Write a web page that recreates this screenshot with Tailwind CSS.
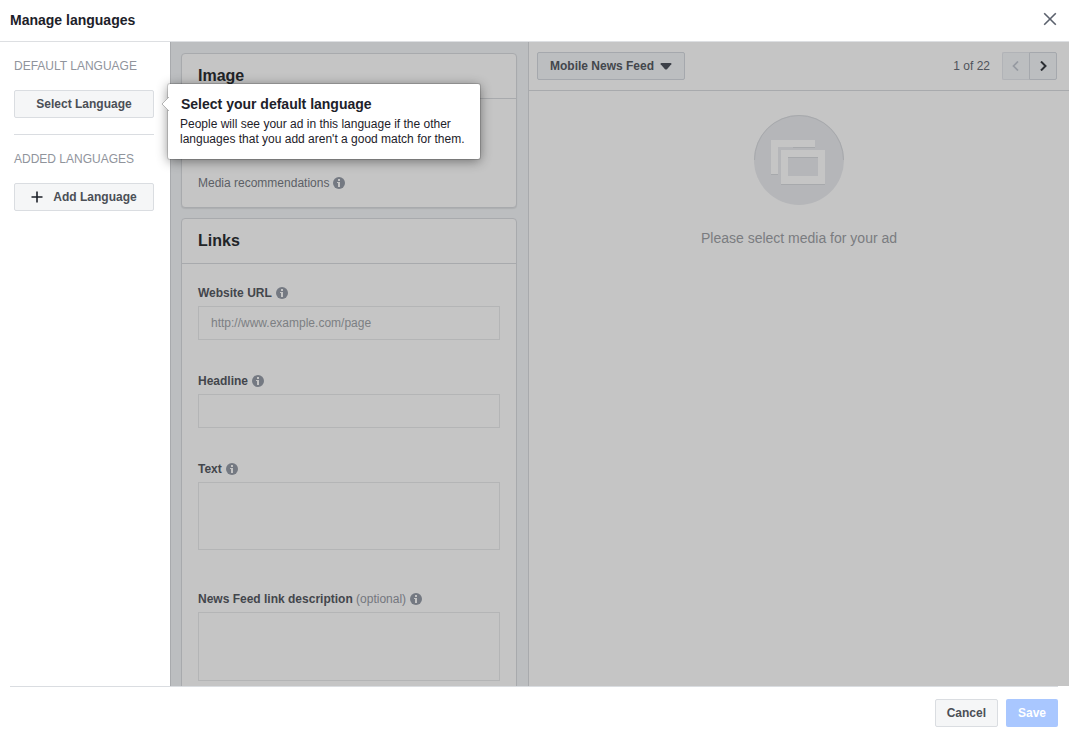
<!DOCTYPE html>
<html lang="en">
<head>
<meta charset="utf-8">
<meta name="viewport" content="width=device-width, initial-scale=1">
<title>Manage languages</title>
<script src="https://cdn.jsdelivr.net/npm/@tailwindcss/browser@4"></script>
</head>
<body class="flex h-screen flex-col overflow-hidden bg-white font-['Liberation_Sans',Arial,sans-serif] text-xs text-[#4b4f56]">
<svg class="hidden">
  <symbol id="info" viewBox="0 0 12 12">
    <circle cx="6" cy="6" r="6" fill="#747982"/>
    <path fill="#c5c5c5" d="M5 2h2v2H5zM4 5h3v5H5V6H4z"/>
  </symbol>
</svg>

<header class="flex h-[42px] shrink-0 items-center justify-between border-b border-[#dddfe2] pr-3 pb-[2px] pl-[10px]">
  <h1 class="text-sm font-bold text-[#1d2129]">Manage languages</h1>
  <button type="button" aria-label="Close" class="pb-[2px]">
    <svg class="size-[14px]" viewBox="0 0 14 14" fill="none" stroke="#5b616d" stroke-width="1.6"><path d="M1.2 1.2l11.6 11.6M12.8 1.2L1.2 12.8"/></svg>
  </button>
</header>

<main class="flex min-h-0 flex-1">
  <aside class="flex w-[170px] shrink-0 flex-col px-4 pt-4 pl-[14px]">
    <h2 class="whitespace-nowrap leading-4 text-[#90949c]">DEFAULT LANGUAGE</h2>
    <div class="relative mt-4">
      <button type="button" class="block h-7 w-full rounded-xs border border-[#dadde1] bg-[#f5f6f7] font-bold">Select Language</button>
      <div role="tooltip" class="absolute -top-[6px] left-full z-10 ml-[14px] w-[312px] rounded-xs bg-white px-3 pt-[10px] pb-3 text-[#1d2129] shadow-[0_0_0_1px_rgba(0,0,0,0.15),0_2px_12px_rgba(0,0,0,0.45)]">
        <svg class="absolute top-[13px] -left-[7px] h-[14px] w-2" viewBox="0 0 8 14"><path d="M8 0L1 7l7 7" fill="#fff" stroke="#b4b4b4"/></svg>
        <h3 class="pl-px text-sm leading-5 font-bold">Select your default language</h3>
        <p class="mt-[3px] leading-[15px]">People will see your ad in this language if the other languages that you add aren't a good match for them.</p>
      </div>
    </div>
    <hr class="my-4 border-[#dadde1]">
    <h2 class="whitespace-nowrap leading-4 text-[#90949c]">ADDED LANGUAGES</h2>
    <button type="button" class="mt-4 flex h-7 items-center justify-center gap-[10px] rounded-xs border border-[#dadde1] bg-[#f5f6f7] font-bold">
      <svg class="size-3" viewBox="0 0 12 12" fill="none" stroke="#1d2129" stroke-width="1.600"><path d="M6 .5v11M.5 6h11"/></svg>
      Add Language
    </button>
  </aside>

  <section class="flex w-[359px] shrink-0 flex-col gap-[10px] overflow-hidden border-x border-[#a8aaad] bg-[#bcbec0] px-[10px] pt-[11px] pr-[11px] text-[#43464c]">
    <article class="shrink-0 rounded border border-[#a8aaad] bg-[#c5c5c5] shadow-[0_1px_1px_rgba(0,0,0,0.08)]">
      <h2 class="flex h-[45px] items-center border-b border-[#a8aaad] px-4 text-base font-bold text-[#222427]">Image</h2>
      <p class="flex items-center gap-1 px-4 pt-[76px] pb-4 leading-4 text-[#5c5f66]">Media recommendations <svg class="size-3"><use href="#info"/></svg></p>
    </article>
    <article class="shrink-0 rounded border border-[#a8aaad] bg-[#c5c5c5]">
      <h2 class="flex h-[45px] items-center border-b border-[#a8aaad] px-4 text-base font-bold text-[#222427]">Links</h2>
      <form class="flex flex-col gap-[33px] px-4 pt-[21px] pb-4">
        <div class="flex flex-col gap-[5px]">
          <label for="url" class="flex items-center gap-1 leading-4 font-bold">Website URL <svg class="size-3"><use href="#info"/></svg></label>
          <input id="url" type="text" placeholder="http://www.example.com/page" class="h-[34px] border border-[#b4b5b6] px-3 placeholder:text-[#7c7f83]">
        </div>
        <div class="flex flex-col gap-[5px]">
          <label for="headline" class="flex items-center gap-1 leading-4 font-bold">Headline <svg class="size-3"><use href="#info"/></svg></label>
          <input id="headline" type="text" class="h-[34px] border border-[#b4b5b6] px-3">
        </div>
        <div class="flex flex-col gap-[5px] pb-2">
          <label for="text" class="flex items-center gap-1 leading-4 font-bold">Text <svg class="size-3"><use href="#info"/></svg></label>
          <textarea id="text" class="h-[68px] resize-none border border-[#b4b5b6] px-3 py-2"></textarea>
        </div>
        <div class="flex flex-col gap-[5px]">
          <label for="desc" class="flex items-center gap-1 leading-4 font-bold"><span>News Feed link description <span class="font-normal text-[#74777e]">(optional)</span></span> <svg class="size-3"><use href="#info"/></svg></label>
          <textarea id="desc" class="h-[69px] resize-none border border-[#b4b5b6] px-3 py-2"></textarea>
        </div>
      </form>
    </article>
  </section>

  <section class="min-w-0 flex-1 bg-[#c5c5c5]">
    <div class="flex items-center justify-between border-b border-[#a8aaad] py-[10px] pr-3 pl-2">
      <div class="relative">
        <select aria-label="Placement" class="h-7 w-[148px] appearance-none rounded-xs border border-[#a5a8ad] bg-[#bcbec0] pl-3 font-bold text-[#43464c]"><option>Mobile News Feed</option></select>
        <svg class="pointer-events-none absolute top-[11px] right-[13px] h-[7px] w-3" viewBox="0 0 12 7"><path d="M1.500 0h9q1.500 0 .8 1.200L7 6.200q-1 .8-2 0L.7 1.200Q0 0 1.500 0z" fill="#3c4048"/></svg>
      </div>
      <div class="flex items-center gap-3">
        <span class="text-[#4f535b]">1 of 22</span>
        <div class="flex">
          <button type="button" disabled aria-label="Previous" class="flex h-7 w-[27px] items-center justify-center rounded-l-xs border border-r-0 border-[#b1b3b7] bg-[#bcbec0]"><svg class="h-[10px] w-2" viewBox="0 0 8 10" fill="none" stroke="#969aa1" stroke-width="1.700"><path d="M6 .5L1.500 5 6 9.500"/></svg></button>
          <button type="button" aria-label="Next" class="flex h-7 w-7 items-center justify-center rounded-r-xs border border-[#a5a8ad] bg-[#bcbec0]"><svg class="h-[10px] w-[7px]" viewBox="0 0 7 10" fill="none" stroke="#2b2e33" stroke-width="2"><path d="M1 .5L5.500 5 1 9.500"/></svg></button>
        </div>
      </div>
    </div>
    <div class="flex flex-col items-center gap-6 pt-6">
      <svg class="size-[90px]" viewBox="0 0 90 90">
        <circle cx="45" cy="45" r="45" fill="#b5b6b9"/>
        <path d="M.5 45a44.500 44.500 0 0 1 89 0" fill="none" stroke="#a7a9ac"/>
        <path d="M17 59.500h7M39 32.500h22M27 69.500h44" fill="none" stroke="#a7a9ac"/>
        <path fill="#c5c5c5" d="M17 25h44v7H24v27h-7z"/>
        <path fill="#c5c5c5" fill-rule="evenodd" d="M27 35h44v34H27zM34 42v19h30V42z"/>
        <path d="M34 42.500h30" stroke="#a7a9ac"/>
      </svg>
      <p class="text-sm leading-[18px] text-[#7a7c80]">Please select media for your ad</p>
    </div>
  </section>
</main>

<footer class="mr-[11px] ml-[10px] flex shrink-0 justify-end gap-2 border-t border-[#dadde1] pt-3 pb-[11px]">
  <button type="button" class="h-7 rounded-xs border border-[#dadde1] bg-[#f5f6f7] px-[11px] font-bold">Cancel</button>
  <button type="button" disabled class="h-7 w-[52px] rounded-xs bg-[#a9c7ff] font-bold text-white">Save</button>
</footer>
</body>
</html>
